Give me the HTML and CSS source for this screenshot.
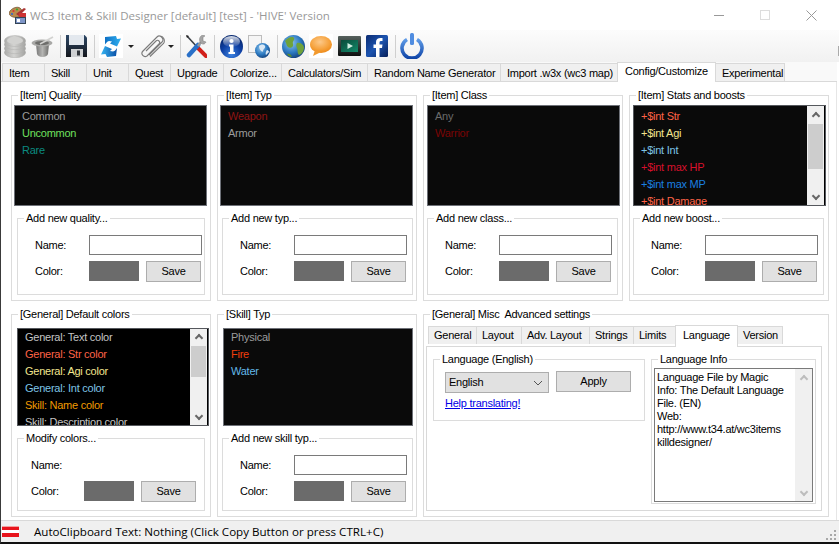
FILE: index.html
```html
<!DOCTYPE html>
<html>
<head>
  <title>WC3 Item &amp; Skill Designer</title>
  <link rel="stylesheet" href="styles.css">
</head>
<body>
<div class="window">
  <div class="titlebar">
    <svg class="app-icon" width="18" height="18" viewBox="0 0 18 18">
      <path d="M1 5c3-4 9-5 11-2s0 4-2 4-1 2 0 3-3 2-6 1S-1 8 1 5z" fill="#b98a4e" stroke="#6b4a25" stroke-width=".7"/>
      <circle cx="4.500" cy="5" r="1.100" fill="#d33"/><circle cx="8" cy="3.500" r="1.100" fill="#3a3"/><circle cx="3" cy="8" r="1.100" fill="#36c"/>
      <path d="M7 8l8-6 2 1-7 7z" fill="#a33"/>
      <rect x="6.500" y="11.500" width="10" height="6" fill="#7f96c8" stroke="#345"/>
      <rect x="10" y="7" width="7" height="4" fill="#c33"/>
      <rect x="8" y="13" width="3" height="3" fill="#fff"/>
    </svg>
    <span class="title-text">WC3 Item &amp; Skill Designer [default] [test] - 'HIVE' Version</span>
    <div class="winbtns">
      <span class="winbtn"><svg width="11" height="11"><path d="M0 5.500h10" stroke="#999"/></svg></span>
      <span class="winbtn"><svg width="11" height="11"><rect x=".5" y=".5" width="9" height="9" fill="none" stroke="#ddd"/></svg></span>
      <span class="winbtn"><svg width="11" height="11"><path d="M.5.5l10 10M10.500.5l-10 10" stroke="#999"/></svg></span>
    </div>
  </div>

  <div class="toolbar">
    <svg width="0" height="0" class="defs">
      <defs>
        <linearGradient id="coin" x1="0" x2="1" y1="0" y2="0"><stop offset="0" stop-color="#a9a9a7"/><stop offset=".45" stop-color="#d4d4d2"/><stop offset="1" stop-color="#a2a2a0"/></linearGradient>
        <linearGradient id="hat" x1="0" x2="1" y1="0" y2="0"><stop offset="0" stop-color="#777"/><stop offset=".5" stop-color="#b5b5b3"/><stop offset="1" stop-color="#6d6d6b"/></linearGradient>
        <linearGradient id="flop" x1="0" x2="0" y1="0" y2="1"><stop offset="0" stop-color="#2d4866"/><stop offset="1" stop-color="#14161c"/></linearGradient>
        <linearGradient id="arrA" x1="0" x2="1" y1="0" y2="0"><stop offset="0" stop-color="#0d6fc4"/><stop offset="1" stop-color="#30b0f0"/></linearGradient>
        <linearGradient id="arrB" x1="0" x2="1" y1="0" y2="0"><stop offset="0" stop-color="#37b6f3"/><stop offset="1" stop-color="#0b4fa6"/></linearGradient>
        <radialGradient id="info" cx=".5" cy=".85" r=".75"><stop offset="0" stop-color="#3b82e0"/><stop offset=".6" stop-color="#0e3fa3"/><stop offset="1" stop-color="#082a72"/></radialGradient>
        <linearGradient id="gloss" x1="0" x2="0" y1="0" y2="1"><stop offset="0" stop-color="#fff" stop-opacity=".85"/><stop offset="1" stop-color="#fff" stop-opacity=".05"/></linearGradient>
        <radialGradient id="earth" cx=".4" cy=".35" r=".7"><stop offset="0" stop-color="#8cc4ec"/><stop offset=".6" stop-color="#2b78c0"/><stop offset="1" stop-color="#143f78"/></radialGradient>
        <radialGradient id="bub" cx=".45" cy=".35" r=".7"><stop offset="0" stop-color="#fcc98a"/><stop offset=".6" stop-color="#f6a33e"/><stop offset="1" stop-color="#ec8512"/></radialGradient>
        <linearGradient id="film" x1="0" x2="0" y1="0" y2="1"><stop offset="0" stop-color="#55605c"/><stop offset="1" stop-color="#0d0f0e"/></linearGradient>
        <linearGradient id="screen" x1="0" x2="1" y1="0" y2="1"><stop offset="0" stop-color="#0a4a3a"/><stop offset="1" stop-color="#138a6a"/></linearGradient>
        <linearGradient id="fb" x1="0" x2="1" y1="0" y2="1"><stop offset="0" stop-color="#0a2a70"/><stop offset=".5" stop-color="#1c54b0"/><stop offset="1" stop-color="#071f58"/></linearGradient>
        <linearGradient id="pow" x1="0" x2="0" y1="0" y2="1"><stop offset="0" stop-color="#5e9ae6"/><stop offset="1" stop-color="#0f45a8"/></linearGradient>
      </defs>
    </svg>
    <!-- coins -->
    <svg width="22" height="23" viewBox="0 0 22 23"><g fill="url(#coin)" stroke="#b0b0ae" stroke-width=".5"><ellipse cx="11" cy="17.500" rx="10.700" ry="5.200"/><ellipse cx="11" cy="13.500" rx="10.700" ry="5.200"/><ellipse cx="11" cy="9.500" rx="10.700" ry="5.200"/><ellipse cx="11" cy="6" rx="10.700" ry="5.500"/></g><ellipse cx="11" cy="5.500" rx="8" ry="3.700" fill="#d2d2d0"/></svg>
    <!-- hat -->
    <svg width="23" height="23" viewBox="0 0 23 23"><path d="M5 9h13l-1 10c-1 4-10 4-11 0z" fill="url(#hat)"/><ellipse cx="11" cy="8" rx="10.500" ry="3.500" fill="#a8a8a6"/><ellipse cx="11" cy="8" rx="7" ry="2" fill="#6e6e6c"/><path d="M9 9L22 2" stroke="#d2d2d0" stroke-width="1.600"/></svg>
    <span class="sep g1"></span>
    <!-- floppy -->
    <svg width="21" height="22" viewBox="0 0 21 22"><path d="M0 0h18.500L21 2.500V22H0z" fill="url(#flop)"/><rect x="3" y="0" width="15" height="10" fill="#e3e8ee"/><rect x="5" y="14" width="12" height="8" fill="#cfd1d3"/><rect x="11" y="15.500" width="3" height="5" fill="#30343a"/></svg>
    <span class="sep g2"></span>
    <!-- refresh arrows -->
    <svg class="gm1" width="24" height="24" viewBox="0 0 24 24"><rect width="24" height="24" fill="#fff"/><path d="M6 3l11-1 1 3 4-.5-4 8-7-3 2-2-3-.5c-2 .5-3 2-4 3.500z" fill="url(#arrA)"/><path d="M17 22l-9 1-1.500-3L2 20.500 6 12l7 3-2 2 3 .5c2-.5 3-2 4-3.500z" fill="url(#arrB)"/></svg>
    <span class="caret"></span>
    <!-- paper clip -->
    <svg class="g1" width="25" height="24" viewBox="0 0 25 24"><g fill="none" stroke="#7a7a7a" stroke-width="1.100"><path d="M9 21L22 8c3-3-2-8-5-5L3 17c-3 3 1 7 4 5L19 10c2-2-1-5-3-3L6 17"/><path d="M10 22.500L23.500 9.500c2-3 0-7-3-7.500"/></g></svg>
    <span class="caret gm2"></span>
    <span class="sep g1"></span>
    <!-- tools -->
    <svg width="21" height="23" viewBox="0 0 21 23"><path d="M1 1l11 12" stroke="#3a3f45" stroke-width="1.600"/><path d="M0 0l3 1-2 2z" fill="#222"/><path d="M11 12l9 9" stroke="#d11f1a" stroke-width="4" stroke-linecap="round"/><path d="M12 10L3 20" stroke="#2a70c8" stroke-width="4.500" stroke-linecap="round"/><path d="M12 11l3-4" stroke="#9a9a9a" stroke-width="2.500"/><path d="M15 1c-2 2-2 5 0 7s4 1 5-1l-3-1V2l2-1c-1-1-3-1-4 0z" fill="#a5a5a5" stroke="#777" stroke-width=".5"/></svg>
    <span class="sep g2"></span>
    <!-- info -->
    <svg width="23" height="23" viewBox="0 0 23 23"><circle cx="11.500" cy="11.500" r="11.500" fill="url(#info)"/><ellipse cx="11.500" cy="6.500" rx="8.500" ry="5.500" fill="url(#gloss)"/><circle cx="11.500" cy="6" r="2.100" fill="#fff"/><path d="M9 9.500h4.500V17H15v2H8.500v-2H10v-5.500H9z" fill="#fff"/></svg>
    <!-- page + globe -->
    <svg width="22" height="23" viewBox="0 0 22 23"><rect x=".5" y=".5" width="13" height="17" fill="#f5f5f5" stroke="#bdbdbd"/><circle cx="14.500" cy="15.500" r="7.500" fill="url(#earth)"/><path d="M11 11c2-2 5-2 6 0s-2 3-2 5-4-1-4-5zM19 15c1 0 2 1 2 2l-3 3c-1-1 0-4 1-5z" fill="#dbe8f4"/></svg>
    <span class="sep g2"></span>
    <!-- globe -->
    <svg class="gm1" width="23" height="23" viewBox="0 0 23 23"><circle cx="11.500" cy="11.500" r="11.500" fill="url(#earth)"/><path d="M3 6c3-4 8-5 9-3s-2 3-1 6-3 5-5 3-1-3-3-6zM15 8c3-1 6 1 7 4 0 4-2 7-5 8-2-2-1-5-2-7s-1-3 0-5z" fill="#6fa23a"/><path d="M5 19c2-1 4 0 5 3-2 0-4-1-5-3z" fill="#5a8c30"/></svg>
    <!-- chat -->
    <svg class="gm1" width="24" height="24" viewBox="0 0 24 24"><rect width="24" height="24" fill="#fff"/><ellipse cx="12" cy="10.500" rx="11" ry="8.500" fill="url(#bub)"/><path d="M6 16l-2 6 8-4z" fill="#f29a2e"/></svg>
    <!-- film -->
    <svg width="23" height="20" class="mid" viewBox="0 0 23 20"><rect width="23" height="20" rx="1" fill="url(#film)"/><rect x="3" y="4" width="17" height="12" fill="url(#screen)"/><path d="M9.500 7l5.500 3-5.500 3z" fill="#cfeee2"/></svg>
    <!-- facebook -->
    <svg width="22" height="22" viewBox="0 0 22 22"><rect width="22" height="22" rx="1.500" fill="url(#fb)"/><path d="M10 22v-9H7.500V9.500H10V7c0-3.500 2.500-4.500 6.500-4V6C14 6 13.500 6 13.500 8v1.500h3l-.5 3.500h-2.500v9z" fill="#fff"/></svg>
    <span class="sep g2"></span>
    <!-- power -->
    <svg class="gm1" width="24" height="26" viewBox="0 0 24 26"><path d="M7 6.500a10 10 0 1 0 10 0" fill="none" stroke="url(#pow)" stroke-width="3.600"/><rect x="10" y="0" width="4" height="12" rx="1.500" fill="#4f8ce0"/></svg>
  </div>

  <div class="tabstrip main-tabs">
    <span class="tab">Item</span>
    <span class="tab">Skill</span>
    <span class="tab">Unit</span>
    <span class="tab">Quest</span>
    <span class="tab">Upgrade</span>
    <span class="tab">Colorize...</span>
    <span class="tab">Calculators/Sim</span>
    <span class="tab">Random Name Generator</span>
    <span class="tab">Import .w3x (wc3 map)</span>
    <span class="tab active">Config/Customize</span>
    <span class="tab">Experimental</span>
  </div>

  <div class="page">
    <div class="row row-top">
      <fieldset class="group group-a">
        <legend>[Item] Quality</legend>
        <ul class="list">
          <li class="c-grey">Common</li>
          <li class="c-green">Uncommon</li>
          <li class="c-teal">Rare</li>
        </ul>
        <fieldset class="sub">
          <legend>Add new quality...</legend>
          <div class="fline"><label>Name:</label><span class="input"></span></div>
          <div class="fline"><label>Color:</label><span class="swatch"></span><span class="btn">Save</span></div>
        </fieldset>
      </fieldset>

      <fieldset class="group group-b">
        <legend>[Item] Typ</legend>
        <ul class="list">
          <li class="c-darkred">Weapon</li>
          <li class="c-grey">Armor</li>
        </ul>
        <fieldset class="sub">
          <legend>Add new typ...</legend>
          <div class="fline"><label>Name:</label><span class="input"></span></div>
          <div class="fline"><label>Color:</label><span class="swatch"></span><span class="btn">Save</span></div>
        </fieldset>
      </fieldset>

      <fieldset class="group group-c">
        <legend>[Item] Class</legend>
        <ul class="list">
          <li class="c-dim">Any</li>
          <li class="c-maroon">Warrior</li>
        </ul>
        <fieldset class="sub">
          <legend>Add new class...</legend>
          <div class="fline"><label>Name:</label><span class="input"></span></div>
          <div class="fline"><label>Color:</label><span class="swatch"></span><span class="btn">Save</span></div>
        </fieldset>
      </fieldset>

      <fieldset class="group group-c">
        <legend>[Item] Stats and boosts</legend>
        <div class="list scroll-list">
          <ul>
            <li class="c-str">+$int Str</li>
            <li class="c-agi">+$int Agi</li>
            <li class="c-int">+$int Int</li>
            <li class="c-hp">+$int max HP</li>
            <li class="c-mp">+$int max MP</li>
            <li class="c-str">+$int Damage</li>
          </ul>
          <div class="scrollbar"><span class="arrow up"></span><span class="thumb"></span><span class="arrow down"></span></div>
        </div>
        <fieldset class="sub">
          <legend>Add new boost...</legend>
          <div class="fline"><label>Name:</label><span class="input"></span></div>
          <div class="fline"><label>Color:</label><span class="swatch"></span><span class="btn">Save</span></div>
        </fieldset>
      </fieldset>
    </div>

    <div class="row row-bottom">
      <fieldset class="group group-a">
        <legend>[General] Default colors</legend>
        <div class="list scroll-list black inset">
          <ul>
            <li class="c-text">General: Text color</li>
            <li class="c-str">General: Str color</li>
            <li class="c-agi">General: Agi color</li>
            <li class="c-int">General: Int color</li>
            <li class="c-orange">Skill: Name color</li>
            <li class="c-text">Skill: Description color</li>
          </ul>
          <div class="scrollbar"><span class="arrow up"></span><span class="thumb"></span><span class="arrow down"></span></div>
        </div>
        <fieldset class="sub short">
          <legend>Modify colors...</legend>
          <div class="fline modify"><label>Name:</label></div>
          <div class="fline modify"><label>Color:</label><span class="swatch"></span><span class="btn">Save</span></div>
        </fieldset>
      </fieldset>

      <fieldset class="group group-b">
        <legend>[Skill] Typ</legend>
        <ul class="list inset skill">
          <li class="c-grey">Physical</li>
          <li class="c-fire">Fire</li>
          <li class="c-water">Water</li>
        </ul>
        <fieldset class="sub short">
          <legend>Add new skill typ...</legend>
          <div class="fline"><label>Name:</label><span class="input"></span></div>
          <div class="fline"><label>Color:</label><span class="swatch"></span><span class="btn">Save</span></div>
        </fieldset>
      </fieldset>

      <fieldset class="group group-wide">
        <legend>[General] Misc&nbsp; Advanced settings</legend>
        <div class="tabstrip inner-tabs">
          <span class="tab">General</span>
          <span class="tab">Layout</span>
          <span class="tab">Adv. Layout</span>
          <span class="tab">Strings</span>
          <span class="tab">Limits</span>
          <span class="tab active">Language</span>
          <span class="tab">Version</span>
        </div>
        <div class="tabpage">
          <fieldset class="sub lang">
            <legend>Language (English)</legend>
            <div class="lang-row">
              <span class="combo">English<svg width="10" height="6"><path d="M1 1l4 4 4-4" fill="none" stroke="#555"/></svg></span>
              <span class="btn apply">Apply</span>
            </div>
            <a class="help" href="#">Help translating!</a>
          </fieldset>
          <fieldset class="sub info">
            <legend>Language Info</legend>
            <div class="textbox">
              <p>Language File by Magic<br>Info: The Default Language<br>File. (EN)<br>Web:<br>http://www.t34.at/wc3items<br>killdesigner/</p>
              <div class="scrollbar disabled"><span class="arrow up"></span><span class="arrow down"></span></div>
            </div>
          </fieldset>
        </div>
      </fieldset>
    </div>
  </div>

  <div class="statusbar">
    <svg class="status-icon" width="17" height="11" viewBox="0 0 17 11"><rect width="17" height="11" fill="#fff"/><rect width="17" height="1" fill="#f3a0a0"/><rect y="1" width="17" height="3" fill="#e8141c"/><rect y="7" width="17" height="4" fill="#e8141c"/></svg>
    <span class="status-text">AutoClipboard Text: Nothing (Click Copy Button or press CTRL+C)</span>
    <svg class="grip" width="11" height="11" fill="#a8a8a8"><rect x="8" y="0" width="2" height="2"/><rect x="4" y="4" width="2" height="2"/><rect x="8" y="4" width="2" height="2"/><rect x="0" y="8" width="2" height="2"/><rect x="4" y="8" width="2" height="2"/><rect x="8" y="8" width="2" height="2"/></svg>
  </div>
</div>
</body>
</html>
```

FILE: styles.css
```css
html, body {
  margin: 0;
  padding: 0;
  overflow: hidden;
}

body {
  background-color: #fff;
  font-family: "Liberation Sans", Arial, sans-serif;
  font-size: 11px;
  letter-spacing: -0.25px;
  color: #000;
}

.window {
  width: 839px;
  height: 544px;
  box-sizing: border-box;
  border-left: 1px solid #3a3a3a;
  border-bottom: 2px solid #111;
  display: flex;
  flex-direction: column;
  background-color: #fff;
}

/* title bar */
.titlebar {
  height: 30px;
  display: flex;
  align-items: center;
  padding-left: 8px;
  flex: none;
}

.app-icon {
  margin-right: 3px;
}

.title-text {
  font-family: "Open Sans", sans-serif;
  font-size: 11.5px;
  letter-spacing: 0;
  color: #999;
}

.winbtns {
  margin-left: auto;
  display: flex;
  margin-right: 5px;
}

.winbtn {
  width: 46px;
  display: flex;
  justify-content: center;
}

/* toolbar */
.toolbar {
  height: 32px;
  flex: none;
  display: flex;
  align-items: center;
  padding-left: 3px;
  gap: 5px;
  background: linear-gradient(#fcfcfc, #f1f1f1);
}

.toolbar::after {
  content: "";
  width: 1px;
  height: 10px;
  margin-left: auto;
  margin-top: 10px;
  background-color: #aaa;
}

.toolbar svg {
  flex: none;
}

.toolbar .defs {
  position: absolute;
}

.sep {
  width: 1px;
  height: 23px;
  background-color: #cfcfcf;
  flex: none;
}

/* small nudges between toolbar items */
.g1 { margin-left: 1px; }
.g2 { margin-left: 2px; }
.gm1 { margin-left: -1px; }
.gm2 { margin-left: -2px; }

.caret {
  width: 0;
  height: 0;
  flex: none;
  border-left: 3px solid transparent;
  border-right: 3px solid transparent;
  border-top: 3px solid #222;
}

/* tabs */
.tabstrip {
  display: grid;
  justify-content: start;
  align-items: end;
  height: 20px;
  box-sizing: border-box;
  flex: none;
  padding-left: 1px;
  background-color: #f9f9f9;
  border-bottom: 1px solid #d9d9d9;
}

.main-tabs {
  grid-template-columns: 42px 42px 42px 42px 53px 58px 86px 133px 117px 98px 69px;
  margin-right: 2px;
}

.tab {
  height: 18px;
  line-height: 18px;
  box-sizing: border-box;
  padding: 0 0 0 6px;
  background-color: #f0f0f0;
  border: 1px solid #d9d9d9;
  border-bottom: none;
  margin-right: -1px;
  white-space: nowrap;
}

.tab.active {
  height: 20px;
  line-height: 16px;
  background-color: #fff;
  margin-bottom: -1px;
  padding: 0 0 0 7px;
  position: relative;
}

/* main page */
.page {
  flex: 1;
  display: flex;
  flex-direction: column;
  margin-right: 2px;
  padding: 0 0 0 10px;
  background-color: #fff;
  border-right: 1px solid #e6e6e6;
}

.row {
  display: flex;
  gap: 6px;
}

.row-top {
  margin-top: 7px;
  height: 212px;
}

.row-bottom {
  margin-top: 7px;
  height: 209px;
}

fieldset {
  margin: 0;
  padding: 0;
  min-width: 0;
  border: 1px solid #dcdcdc;
}

legend {
  padding: 0 2px;
  margin-left: 6px;
  line-height: 12px;
  white-space: nowrap;
}

.group {
  width: 200px;
  box-sizing: border-box;
  padding: 0 2px;
  display: flex;
  flex-direction: column;
}

.group > legend {
  margin-left: 4px;
}

.group-wide {
  width: 406px;
}

/* listboxes */
.list {
  list-style: none;
  margin: 4px 1px 0 0;
  padding: 2px 0 0 7px;
  height: 101px;
  flex: none;
  box-sizing: border-box;
  background-color: #0a0a0a;
  border: 1px solid #6e7178;
  overflow: hidden;
}

.group-c .list {
  margin-left: 1px;
  margin-right: 0;
}

.list.inset {
  margin-top: 8px;
  height: 98px;
  padding-top: 0;
}

.list.skill {
  margin-left: 3px;
}

.list li {
  height: 17px;
  line-height: 17px;
  white-space: nowrap;
}

.scroll-list {
  display: flex;
  padding: 0;
  border-color: #55585d;
}

.scroll-list ul {
  list-style: none;
  flex: 1;
  margin: 0;
  padding: 2px 0 0 7px;
}

.black {
  background-color: #000;
  margin-left: 3px;
  margin-right: -1px;
}

.black ul {
  padding-top: 0;
}

.scrollbar {
  width: 17px;
  flex: none;
  background-color: #f0f0f0;
  display: flex;
  flex-direction: column;
  align-items: center;
  border-right: 1px solid #000;
}

.arrow {
  width: 6px;
  height: 6px;
  margin: 7px 0 5px;
  box-sizing: border-box;
  border-left: 2px solid #666;
  border-top: 2px solid #666;
  transform: rotate(45deg);
  flex: none;
}

.arrow.down {
  margin-top: auto;
  margin-bottom: 6px;
  transform: rotate(225deg);
}

.thumb {
  width: 15px;
  height: 45px;
  background-color: #cdcdcd;
}

.black .thumb {
  height: 31px;
}

.black .arrow.up {
  margin-top: 6px;
}

.scrollbar.disabled {
  background-color: #f0f0f0;
  border-right: none;
}

.disabled .arrow {
  border-color: #bdbdbd;
}

/* add new ... boxes */
.sub {
  height: 83px;
  flex: none;
  box-sizing: border-box;
  padding: 0;
  margin: 6px 3px 0;
}

.group-b .sub {
  margin-left: 2px;
  margin-right: 1px;
}

.group-c .sub {
  margin-left: 1px;
  margin-right: 2px;
}

.sub.short {
  height: 79px;
}

.fline {
  display: flex;
  align-items: center;
  height: 26px;
  padding-left: 17px;
}

.fline:first-of-type {
  margin-top: 8px;
}

.fline label {
  width: 54px;
  flex: none;
}

.input {
  width: 113px;
  height: 20px;
  box-sizing: border-box;
  border: 1px solid #7a7a7a;
  background-color: #fff;
}

.swatch {
  width: 50px;
  height: 20px;
  background-color: #6b6b6b;
  flex: none;
}

.btn {
  width: 55px;
  height: 21px;
  line-height: 19px;
  box-sizing: border-box;
  text-align: center;
  background-color: #e1e1e1;
  border: 1px solid #adadad;
  margin-left: 7px;
  flex: none;
}

.modify {
  padding-left: 13px;
}

.modify label {
  width: 53px;
}

/* list text colours */
.c-grey { color: #9c9c9c; }
.c-green { color: #6fe05f; }
.c-teal { color: #0b8a80; }
.c-darkred { color: #8f1414; }
.c-dim { color: #6b6b6b; }
.c-maroon { color: #7a0404; }
.c-str { color: #ff6347; }
.c-agi { color: #f2e58f; }
.c-int { color: #7ec4e6; }
.c-hp { color: #d8102c; }
.c-mp { color: #1a7fe0; }
.c-text { color: #c4c4c4; }
.c-orange { color: #f09a00; }
.c-fire { color: #f23f0c; }
.c-water { color: #63b8e8; }

/* misc tab control */
.inner-tabs {
  grid-template-columns: 48px 45px 68px 44px 42px 62px 45px;
  background-color: #fff;
  height: 21px;
  margin-top: 5px;
  padding-left: 2px;
  border-bottom: none;
}

.inner-tabs .tab {
  height: 18px;
  line-height: 17px;
  margin-bottom: 2px;
  padding-left: 5px;
}

.inner-tabs .tab.active {
  height: 22px;
  line-height: 19px;
  margin-bottom: -1px;
  padding-left: 7px;
  border-bottom: none;
  z-index: 1;
}

.tabpage {
  height: 165px;
  box-sizing: border-box;
  border: 1px solid #d9d9d9;
  margin: 0 4px 0 0;
  padding: 0 6px;
  display: flex;
  gap: 6px;
}

.lang {
  width: 212px;
  height: 68px;
  margin: 6px 0 0;
}

.lang-row {
  display: flex;
  align-items: center;
  margin: 7px 0 0 11px;
}

.combo {
  width: 104px;
  height: 21px;
  line-height: 21px;
  box-sizing: border-box;
  padding: 0 0 0 3px;
  background-color: #e1e1e1;
  border: 1px solid #adadad;
  display: flex;
  align-items: center;
  justify-content: space-between;
}

.combo svg {
  margin-right: 5px;
}

.apply {
  width: 75px;
  margin-left: 7px;
  margin-top: -2px;
}

.help {
  display: block;
  margin: 4px 0 0 11px;
  color: #0000e6;
}

.info {
  width: 165px;
  height: 151px;
  margin: 6px 0 0;
  padding: 0 2px;
}

.info legend {
  margin-left: 4px;
}

.textbox {
  display: flex;
  height: 134px;
  box-sizing: border-box;
  border: 1px solid #7a7a7a;
  margin-top: 3px;
}

.textbox p {
  margin: 0;
  padding: 2px 0 0 2px;
  flex: 1;
  line-height: 13px;
  white-space: nowrap;
  overflow: hidden;
}

/* status bar */
.statusbar {
  height: 22px;
  flex: none;
  display: flex;
  align-items: center;
  background-color: #f0f0f0;
  border-top: 1px solid #d9d9d9;
  box-sizing: border-box;
}

.status-icon {
  margin-left: 1px;
}

.status-text {
  margin-left: 15px;
  font-family: "Open Sans", sans-serif;
  font-size: 11.6px;
  letter-spacing: 0;
}

.grip {
  margin-left: auto;
  margin-right: 2px;
  margin-top: 8px;
}
```
